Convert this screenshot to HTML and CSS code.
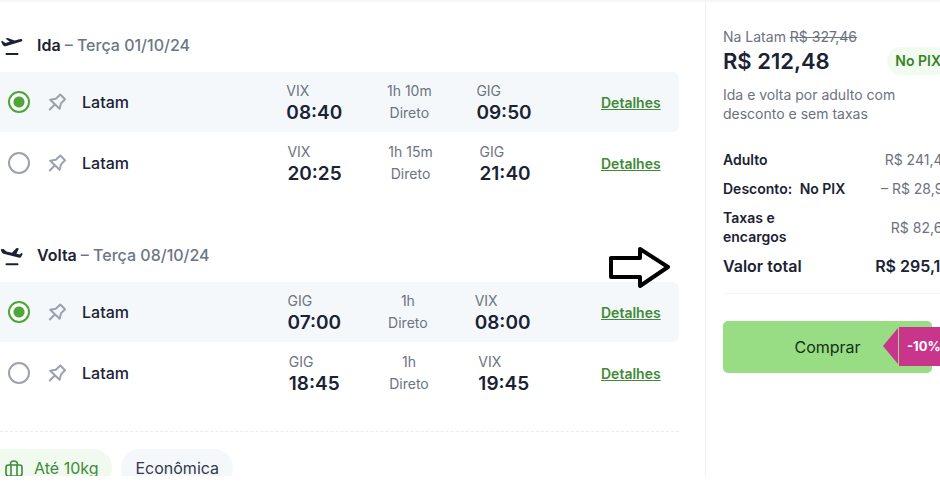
FILE: index.html
```html
<!DOCTYPE html>
<html lang="pt-BR">
<head>
  <meta charset="UTF-8">
  <title>Voos Latam</title>
  <meta name="viewport" content="width=device-width, initial-scale=1.0">
  <link rel="stylesheet" href="styles.css">
</head>
<body>
  <svg class="sprite" aria-hidden="true">
    <symbol id="pin" viewBox="0 0 18 18">
      <path d="M12.300 1.500 17 6.200 13 10.400 11.600 15.800 2.200 6.700 7.800 5.700ZM6.800 11.500 1.800 16.500" fill="none" stroke="#9aa1b2" stroke-width="2" stroke-linejoin="round" stroke-linecap="round"/>
    </symbol>
  </svg>
  <div class="page">
    <main class="flights">
      <section class="leg">
        <h2 class="leg-title">
          <svg class="plane" viewBox="0 0 23 24"><path d="M6.500 21h11" stroke="#1a2233" stroke-width="2" stroke-linecap="round"/><path d="M1 8.600 2.600 8.100 5.300 9.900 9.800 8.700 5.500 5.600 7.800 4.900 14.500 7.600 20.500 6C22.400 5.600 23.100 7.800 21.300 8.400L6.500 13C4.800 13.500 3.900 13.300 3 12.200Z" fill="#1a2233"/></svg>
          <span>Ida <span class="date">– Terça 01/10/24</span></span>
        </h2>
        <div class="options">
          <div class="option selected">
            <label class="carrier">
              <input type="radio" name="ida" checked>
              <svg class="pin"><use href="#pin"/></svg>
              <span>Latam</span>
            </label>
            <div class="trip">
              <div class="stop">VIX<strong>08:40</strong></div>
              <div class="duration">1h 10m<span>Direto</span></div>
              <div class="stop">GIG<strong>09:50</strong></div>
            </div>
            <a class="details" href="#">Detalhes</a>
          </div>
          <div class="option">
            <label class="carrier">
              <input type="radio" name="ida">
              <svg class="pin"><use href="#pin"/></svg>
              <span>Latam</span>
            </label>
            <div class="trip">
              <div class="stop">VIX<strong>20:25</strong></div>
              <div class="duration">1h 15m<span>Direto</span></div>
              <div class="stop">GIG<strong>21:40</strong></div>
            </div>
            <a class="details" href="#">Detalhes</a>
          </div>
        </div>
      </section>
      <section class="leg last">
        <h2 class="leg-title">
          <svg class="plane" viewBox="0 0 23 24"><path d="M6.500 21.300h11" stroke="#1a2233" stroke-width="2" stroke-linecap="round"/><path d="M.8 6.300 3.500 6.100 6.500 8.600 12 9.700 16.500 5 18.900 5.500 16.500 10.800 19.800 11.400 21.600 9.800 22.700 11 20.900 14.200C20.300 14.800 19.400 14.900 18.300 14.600L3.500 10.700C2.100 10.200 1.200 9.200.8 6.300Z" fill="#1a2233"/></svg>
          <span>Volta <span class="date">– Terça 08/10/24</span></span>
        </h2>
        <div class="options">
          <div class="option selected">
            <label class="carrier">
              <input type="radio" name="volta" checked>
              <svg class="pin"><use href="#pin"/></svg>
              <span>Latam</span>
            </label>
            <div class="trip">
              <div class="stop">GIG<strong>07:00</strong></div>
              <div class="duration">1h<span>Direto</span></div>
              <div class="stop">VIX<strong>08:00</strong></div>
            </div>
            <a class="details" href="#">Detalhes</a>
          </div>
          <div class="option">
            <label class="carrier">
              <input type="radio" name="volta">
              <svg class="pin"><use href="#pin"/></svg>
              <span>Latam</span>
            </label>
            <div class="trip">
              <div class="stop">GIG<strong>18:45</strong></div>
              <div class="duration">1h<span>Direto</span></div>
              <div class="stop">VIX<strong>19:45</strong></div>
            </div>
            <a class="details" href="#">Detalhes</a>
          </div>
        </div>
      </section>
      <div class="chips">
        <span class="chip green">
          <svg class="bag" viewBox="0 0 18 18" fill="none" stroke="#3f8a3c" stroke-width="1.600"><rect x="1" y="6" width="16" height="11" rx="2.500"/><path d="M6 17V6M12 17V6M5.500 6V5a3.500 3 0 0 1 7 0v1"/></svg>
          Até 10kg
        </span>
        <span class="chip">Econômica</span>
      </div>
      <svg class="arrow" viewBox="0 0 64 44"><path d="M4 13H33V4L61 22 33 41V32H4Z" fill="#fff" stroke="#000" stroke-width="4" stroke-linejoin="round"/></svg>
    </main>
    <aside class="summary">
      <p class="old-price">Na Latam <s>R$ 327,46</s></p>
      <div class="price-row">
        <strong class="price">R$ 212,48</strong>
        <span class="pix">No PIX</span>
      </div>
      <p class="note">Ida e volta por adulto com desconto e sem taxas</p>
      <dl class="costs">
        <div class="cost"><dt>Adulto</dt><dd>R$ 241,45</dd></div>
        <div class="cost"><dt>Desconto: <span class="method">No PIX</span></dt><dd>– R$ 28,97</dd></div>
        <div class="cost"><dt>Taxas e<br>encargos</dt><dd>R$ 82,66</dd></div>
        <div class="cost total"><dt>Valor total</dt><dd>R$ 295,14</dd></div>
      </dl>
      <div class="buy-area">
        <button class="buy" type="button">Comprar</button>
        <span class="discount">-10%</span>
      </div>
    </aside>
  </div>
</body>
</html>
```
FILE: styles.css
```css
* { box-sizing: border-box; }
body { margin: 0; background: #fff; color: #1a2233; font-family: Inter, "Liberation Sans", sans-serif; font-size: 14px; }
h2, p, dl, dd { margin: 0; }
.sprite { display: none; }
.page { display: grid; grid-template-columns: 1fr 235px; height: calc(100vh - 24px); overflow: hidden; border-top: 2px solid #f6f6f7; }

/* flights */
.flights { position: relative; padding: 10px 26px 0 0; }
.leg { padding: 6px 0 28px; border-bottom: 1px solid #fdfdfd; }
.leg.last { border-bottom: 1px dashed #ebecef; }
.leg-title { display: flex; align-items: center; gap: 14px; height: 54px; font-size: 16px; font-weight: 600; }
.date { color: #6b7685; font-weight: 500; }
.plane { width: 23px; height: 24px; }
.options { display: grid; gap: 1px; }
.option { display: grid; grid-template-columns: 264px 1fr 125px; align-items: center; height: 60px; border-radius: 0 6px 6px 0; }
.selected { background: #f5f8fb; }
.carrier { display: flex; align-items: center; padding-left: 8px; font-size: 16px; font-weight: 500; }
.carrier input { appearance: none; width: 22px; height: 22px; margin: 0 18px 0 0; border: 2px solid #9ea2af; border-radius: 50%; background: #fff; }
.carrier input:checked { border-color: #4da636; background: radial-gradient(circle, #4da636 5px, #fff 6px); }
.pin { width: 18px; height: 18px; margin-right: 16px; }
.trip { display: flex; justify-content: space-around; padding-top: 2px; }
.stop, .duration { color: #6b7480; line-height: 20px; }
.stop strong { display: block; color: #1a2233; font-size: 19px; font-weight: 600; line-height: 24px; }
.duration { text-align: center; }
.duration span { display: block; line-height: 24px; }
.details { padding-left: 47px; color: #438a37; font-weight: 600; }
.chips { display: flex; gap: 9px; padding-top: 17px; }
.chip { display: flex; align-items: center; height: 38px; padding: 0 14px; border-radius: 19px; background: #f5f8fb; color: #303949; font-size: 16px; }
.green { gap: 11px; padding-left: 5px; border-radius: 0 19px 19px 0; background: #f0faee; color: #3f8a3c; }
.bag { width: 18px; height: 18px; }
.arrow { position: absolute; top: 243px; right: 34px; width: 64px; height: 44px; }

/* summary */
.summary { padding: 26px 8px 0 17px; border-left: 1px solid #f1f1f3; }
.old-price { color: #6b7280; line-height: 18px; }
.price-row { display: flex; align-items: center; justify-content: space-between; height: 30px; margin-right: -17px; }
.price { font-size: 22px; font-weight: 600; }
.pix { padding: 0 8px; border-radius: 14px; background: #f2fbef; color: #388226; font-weight: 600; line-height: 28px; }
.note { margin-top: 9px; color: #6b7280; line-height: 19px; }
.costs { display: grid; gap: 10px; margin-right: -19px; padding: 27px 0 16px; border-bottom: 1px solid #f6f6f8; line-height: 19px; white-space: nowrap; }
.cost { display: flex; align-items: center; justify-content: space-between; }
.cost dt { font-weight: 600; }
.cost dd { color: #6b7280; }
.method { margin-left: 4px; }
.total { line-height: 21px; }
.total dt, .total dd { color: #1a2233; font-size: 16px; font-weight: 600; }
.buy-area { position: relative; margin-top: 27px; }
.buy { width: 100%; height: 52px; border: 0; border-radius: 5px; background: #98dc83; color: #16301a; font: 16px Inter, "Liberation Sans", sans-serif; }
.discount { position: absolute; top: 6px; left: 176px; padding: 0 8px; background: #c9358b; color: #fff; font-size: 13px; font-weight: 700; line-height: 39px; }
.discount::before { content: ""; position: absolute; top: 1px; right: calc(100% + 1px); border: solid transparent; border-width: 18px 15px 18px 0; border-right-color: #c9358b; }
```
